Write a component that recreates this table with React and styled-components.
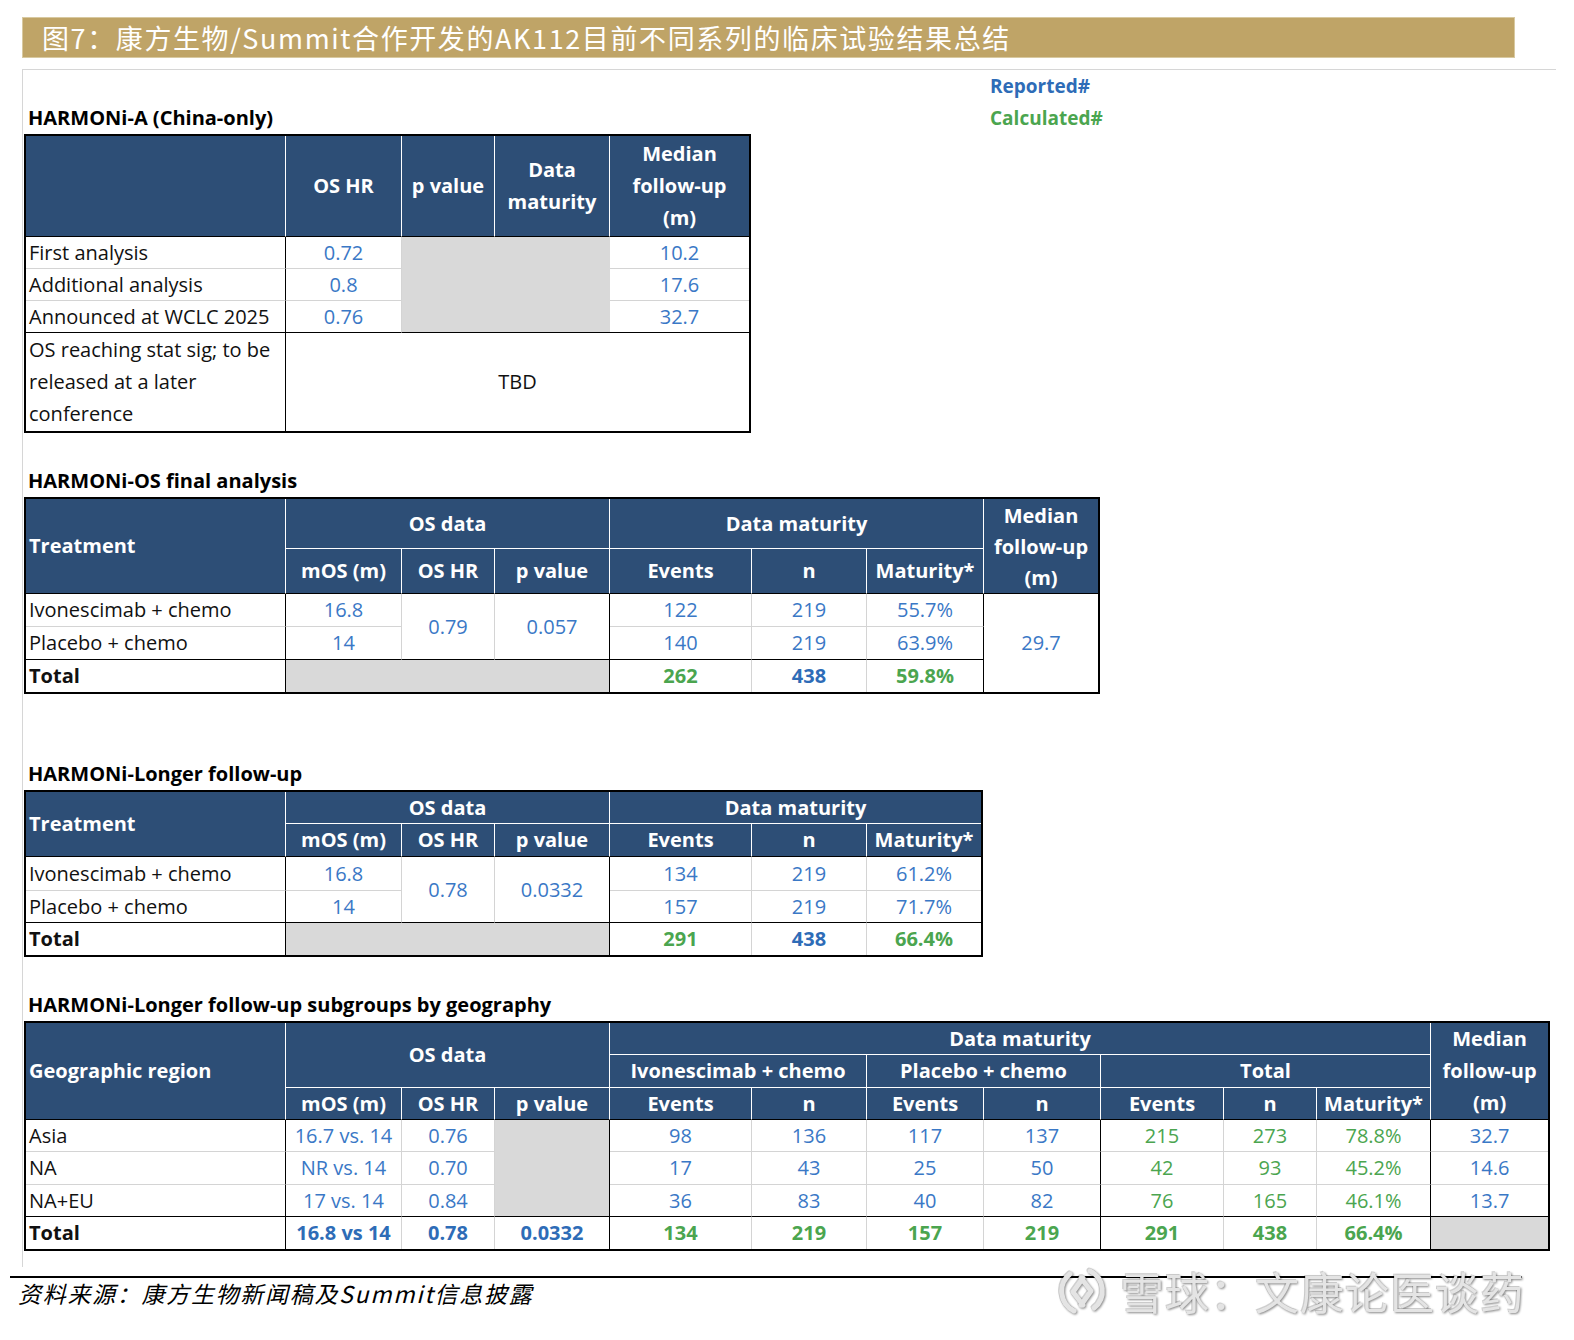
import React from 'react';
import styled, { createGlobalStyle } from 'styled-components';

// --- palette ---
const C = {
  gold: '#bfa467',
  head: '#2d4e76',
  grid: '#d4d4d4',
  fill: '#d9d9d9',
  ink: '#111111',
  blue: '#3a78c6',
  blueBold: '#2e6cb7',
  green: '#4ba54f',
  mark: '#e4e4e4',
};

const tones = { ink: C.ink, blue: C.blue, blueBold: C.blueBold, green: C.green };

const rule = (c) =>
  ({ k: '1px solid #000', g: `1px solid ${C.grid}`, w: '1px solid #fff', n: 'none' }[c]);

const GlobalStyle = createGlobalStyle`
  html, body { margin: 0; padding: 0; background: #fff; }
  body { font-family: "Open Sans", "Noto Sans", "Noto Sans CJK SC", sans-serif; }
`;

// --- Styled Components ---
const Page = styled.div`
  width: 1574px;
  min-height: 1340px;
  padding-top: 17px;
  box-sizing: border-box;
`;

const TitleBar = styled.div`
  margin-left: 22px;
  width: 1493px;
  height: 41px;
  box-sizing: border-box;
  background: ${C.gold};
  border: 1px solid #d8c9a0;
  padding-left: 19px;
  display: flex;
  align-items: center;
  color: #fff;
  font-family: "Noto Sans CJK SC", sans-serif;
  font-size: 27px;
  letter-spacing: 1.6px;
  white-space: nowrap;
`;

const Sheet = styled.div`
  margin: 11px 0 0 22px;
  width: 1532px;
  border-top: 1px solid #d6d6d6;
  border-left: 1px solid #d6d6d6;
  padding: 0 0 16px 1px;
`;

const TopRow = styled.div`
  display: flex;
  align-items: flex-start;
`;

const Section = styled.section`
  margin-top: ${(p) => p.$gap || 0}px;
`;

const SectionTitle = styled.div`
  height: 32px;
  line-height: 32px;
  padding-left: 4px;
  font-size: 20px;
  font-weight: 700;
  color: #000;
  white-space: nowrap;
`;

const Legend = styled.div`
  margin-left: 239px;
  display: flex;
  flex-direction: column;
`;

const LegendItem = styled.div`
  height: 32px;
  line-height: 32px;
  font-size: 19px;
  font-weight: 700;
  color: ${(p) => tones[p.$tone]};
`;

const Grid = styled.table`
  border-collapse: separate;
  border-spacing: 0;
  table-layout: fixed;
  width: ${(p) => p.$w}px;
  border: 2px solid #000;
  font-size: 20px;
`;

const Col = styled.col`
  width: ${(p) => p.$w}px;
`;

const Row = styled.tr`
  height: ${(p) => p.$h}px;
`;

const Th = styled.td`
  background: ${C.head};
  color: #fff;
  font-weight: 700;
  text-align: ${(p) => (p.$left ? 'left' : 'center')};
  padding: 0 2px 0 ${(p) => (p.$left ? 3 : 2)}px;
  line-height: ${(p) => p.$lh || 24}px;
  border-right: ${(p) => rule(p.$r || 'w')};
  border-bottom: ${(p) => rule(p.$b || 'w')};
  white-space: nowrap;
  overflow: hidden;
`;

const Td = styled.td`
  background: ${(p) => (p.$fill ? C.fill : '#fff')};
  color: ${(p) => tones[p.$tone || 'blue']};
  font-weight: ${(p) => (p.$bold ? 700 : 400)};
  text-align: ${(p) => (p.$left ? 'left' : 'center')};
  padding: 0 2px 0 ${(p) => (p.$left ? 3 : 2)}px;
  line-height: ${(p) => p.$lh || 24}px;
  border-right: ${(p) => rule(p.$r || 'g')};
  border-bottom: ${(p) => rule(p.$b || 'g')};
  white-space: nowrap;
  overflow: hidden;
`;

const Label = (props) => <Td $left $tone="ink" $r="k" {...props} />;

const Footer = styled.footer`
  position: relative;
  margin: 9px 0 0 10px;
  width: 1512px;
  height: 56px;
  border-top: 2px solid #000;
`;

const Source = styled.div`
  padding: 0 0 0 8px;
  line-height: 30px;
  font-family: "Noto Sans CJK SC", sans-serif;
  font-style: italic;
  font-size: 23px;
  letter-spacing: 1.7px;
  color: #000;
`;

const Watermark = styled.div`
  position: absolute;
  left: 1046px;
  top: -15px;
  display: flex;
  align-items: center;
  gap: 12px;
  line-height: 56px;
  white-space: nowrap;
  color: ${C.mark};
  font-family: "Noto Sans CJK SC", sans-serif;
  font-size: 44px;
  font-weight: 400;
  letter-spacing: 1px;
  filter: drop-shadow(1.5px 1.5px 1px rgba(0, 0, 0, 0.45)) drop-shadow(-0.5px -0.5px 0.5px rgba(0, 0, 0, 0.18));
`;

const LogoBox = styled.svg`
  flex-shrink: 0;
`;

const SnowballLogo = () => (
  <LogoBox width="52" height="52" viewBox="0 0 52 52" fill="none" stroke={C.mark} strokeWidth="5" strokeLinecap="round" strokeLinejoin="round">
    <path d="M14 9 A22 22 0 0 0 18 46" />
    <path d="M38 43 A22 22 0 0 0 34 6" />
    <path d="M27 13 L17 27 L27 40" />
    <path d="M25 13 L35 26 L25 40" />
  </LogoBox>
);

const HarmoniA = () => (
  <Grid $w={727}>
    <colgroup>
      {[260, 116, 93, 115, 139].map((w, i) => <Col key={i} $w={w} />)}
    </colgroup>
    <tbody>
      <Row $h={101}>
        <Th $b="k" />
        <Th $b="k">OS HR</Th>
        <Th $b="k">p value</Th>
        <Th $b="k" $lh={32}>Data<br />maturity</Th>
        <Th $b="k" $r="n" $lh={32}>Median<br />follow-up<br />(m)</Th>
      </Row>
      <Row $h={32}>
        <Label>First analysis</Label>
        <Td>0.72</Td>
        <Td $fill colSpan={2} rowSpan={3} $r="n" $b="k" />
        <Td $r="n">10.2</Td>
      </Row>
      <Row $h={32}>
        <Label>Additional analysis</Label>
        <Td>0.8</Td>
        <Td $r="n">17.6</Td>
      </Row>
      <Row $h={32}>
        <Label $b="k">Announced at WCLC 2025</Label>
        <Td $b="k">0.76</Td>
        <Td $b="k" $r="n">32.7</Td>
      </Row>
      <Row $h={98}>
        <Label $b="n" $lh={32}>OS reaching stat sig; to be<br />released at a later<br />conference</Label>
        <Td colSpan={4} $tone="ink" $r="n" $b="n">TBD</Td>
      </Row>
    </tbody>
  </Grid>
);

const HarmoniOS = () => (
  <Grid $w={1076}>
    <colgroup>
      {[260, 116, 93, 115, 142, 115, 117, 114].map((w, i) => <Col key={i} $w={w} />)}
    </colgroup>
    <tbody>
      <Row $h={50}>
        <Th $left rowSpan={2} $b="k">Treatment</Th>
        <Th colSpan={3}>OS data</Th>
        <Th colSpan={3}>Data maturity</Th>
        <Th rowSpan={2} $r="n" $b="k" $lh={31}>Median<br />follow-up<br />(m)</Th>
      </Row>
      <Row $h={45}>
        <Th $b="k">mOS (m)</Th>
        <Th $b="k">OS HR</Th>
        <Th $b="k">p value</Th>
        <Th $b="k">Events</Th>
        <Th $b="k">n</Th>
        <Th $b="k">Maturity*</Th>
      </Row>
      <Row $h={33}>
        <Label>Ivonescimab + chemo</Label>
        <Td>16.8</Td>
        <Td rowSpan={2} $b="k">0.79</Td>
        <Td rowSpan={2} $b="k" $r="k">0.057</Td>
        <Td>122</Td>
        <Td>219</Td>
        <Td $r="k">55.7%</Td>
        <Td rowSpan={3} $r="n" $b="n">29.7</Td>
      </Row>
      <Row $h={33}>
        <Label $b="k">Placebo + chemo</Label>
        <Td $b="k">14</Td>
        <Td $b="k">140</Td>
        <Td $b="k">219</Td>
        <Td $b="k" $r="k">63.9%</Td>
      </Row>
      <Row $h={32}>
        <Label $b="n" $bold>Total</Label>
        <Td $fill colSpan={3} $r="k" $b="n" />
        <Td $b="n" $bold $tone="green">262</Td>
        <Td $b="n" $bold $tone="blueBold">438</Td>
        <Td $b="n" $r="k" $bold $tone="green">59.8%</Td>
      </Row>
    </tbody>
  </Grid>
);

const HarmoniLonger = () => (
  <Grid $w={959}>
    <colgroup>
      {[260, 116, 93, 115, 142, 115, 114].map((w, i) => <Col key={i} $w={w} />)}
    </colgroup>
    <tbody>
      <Row $h={32}>
        <Th $left rowSpan={2} $b="k">Treatment</Th>
        <Th colSpan={3}>OS data</Th>
        <Th colSpan={3} $r="n">Data maturity</Th>
      </Row>
      <Row $h={33}>
        <Th $b="k">mOS (m)</Th>
        <Th $b="k">OS HR</Th>
        <Th $b="k">p value</Th>
        <Th $b="k">Events</Th>
        <Th $b="k">n</Th>
        <Th $b="k" $r="n">Maturity*</Th>
      </Row>
      <Row $h={34}>
        <Label>Ivonescimab + chemo</Label>
        <Td>16.8</Td>
        <Td rowSpan={2} $b="k">0.78</Td>
        <Td rowSpan={2} $b="k" $r="k">0.0332</Td>
        <Td>134</Td>
        <Td>219</Td>
        <Td $r="n">61.2%</Td>
      </Row>
      <Row $h={32}>
        <Label $b="k">Placebo + chemo</Label>
        <Td $b="k">14</Td>
        <Td $b="k">157</Td>
        <Td $b="k">219</Td>
        <Td $b="k" $r="n">71.7%</Td>
      </Row>
      <Row $h={32}>
        <Label $b="n" $bold>Total</Label>
        <Td $fill colSpan={3} $r="k" $b="n" />
        <Td $b="n" $bold $tone="green">291</Td>
        <Td $b="n" $bold $tone="blueBold">438</Td>
        <Td $b="n" $r="n" $bold $tone="green">66.4%</Td>
      </Row>
    </tbody>
  </Grid>
);

const regions = [
  { name: 'Asia', mos: '16.7 vs. 14', hr: '0.76', ivo: ['98', '136'], pbo: ['117', '137'], tot: ['215', '273', '78.8%'], fu: '32.7', h: 32 },
  { name: 'NA', mos: 'NR vs. 14', hr: '0.70', ivo: ['17', '43'], pbo: ['25', '50'], tot: ['42', '93', '45.2%'], fu: '14.6', h: 33 },
  { name: 'NA+EU', mos: '17 vs. 14', hr: '0.84', ivo: ['36', '83'], pbo: ['40', '82'], tot: ['76', '165', '46.1%'], fu: '13.7', h: 32 },
];

const Geography = () => (
  <Grid $w={1526}>
    <colgroup>
      {[260, 116, 93, 115, 142, 115, 117, 117, 123, 93, 114, 117].map((w, i) => <Col key={i} $w={w} />)}
    </colgroup>
    <tbody>
      <Row $h={32}>
        <Th $left rowSpan={3} $b="k">Geographic region</Th>
        <Th colSpan={3} rowSpan={2}>OS data</Th>
        <Th colSpan={7}>Data maturity</Th>
        <Th rowSpan={3} $r="n" $b="k" $lh={32}>Median<br />follow-up<br />(m)</Th>
      </Row>
      <Row $h={33}>
        <Th colSpan={2}>Ivonescimab + chemo</Th>
        <Th colSpan={2}>Placebo + chemo</Th>
        <Th colSpan={3}>Total</Th>
      </Row>
      <Row $h={32}>
        {['mOS (m)', 'OS HR', 'p value', 'Events', 'n', 'Events', 'n', 'Events', 'n', 'Maturity*'].map((t, i) => (
          <Th key={i} $b="k">{t}</Th>
        ))}
      </Row>
      {regions.map((r, i) => {
        const last = i === regions.length - 1;
        const b = last ? 'k' : 'g';
        return (
          <Row key={r.name} $h={r.h}>
            <Label $b={b}>{r.name}</Label>
            <Td $b={b}>{r.mos}</Td>
            <Td $b={b}>{r.hr}</Td>
            {i === 0 && <Td $fill rowSpan={3} $r="k" $b="k" />}
            <Td $b={b}>{r.ivo[0]}</Td>
            <Td $b={b}>{r.ivo[1]}</Td>
            <Td $b={b}>{r.pbo[0]}</Td>
            <Td $b={b} $r="k">{r.pbo[1]}</Td>
            <Td $b={b} $tone="green">{r.tot[0]}</Td>
            <Td $b={b} $tone="green">{r.tot[1]}</Td>
            <Td $b={b} $r="k" $tone="green">{r.tot[2]}</Td>
            <Td $b={b} $r="n">{r.fu}</Td>
          </Row>
        );
      })}
      <Row $h={32}>
        <Label $b="n" $bold>Total</Label>
        <Td $b="n" $bold $tone="blueBold">16.8 vs 14</Td>
        <Td $b="n" $bold $tone="blueBold">0.78</Td>
        <Td $b="n" $r="k" $bold $tone="blueBold">0.0332</Td>
        <Td $b="n" $bold $tone="green">134</Td>
        <Td $b="n" $bold $tone="green">219</Td>
        <Td $b="n" $bold $tone="green">157</Td>
        <Td $b="n" $r="k" $bold $tone="green">219</Td>
        <Td $b="n" $bold $tone="green">291</Td>
        <Td $b="n" $bold $tone="green">438</Td>
        <Td $b="n" $r="k" $bold $tone="green">66.4%</Td>
        <Td $fill $b="n" $r="n" />
      </Row>
    </tbody>
  </Grid>
);

const App = () => (
  <Page>
    <GlobalStyle />
    <TitleBar>图7：康方生物/Summit合作开发的AK112目前不同系列的临床试验结果总结</TitleBar>
    <Sheet>
      <TopRow>
        <Section $gap={32}>
          <SectionTitle>HARMONi-A (China-only)</SectionTitle>
          <HarmoniA />
        </Section>
        <Legend>
          <LegendItem $tone="blueBold">Reported#</LegendItem>
          <LegendItem $tone="green">Calculated#</LegendItem>
        </Legend>
      </TopRow>
      <Section $gap={32}>
        <SectionTitle>HARMONi-OS final analysis</SectionTitle>
        <HarmoniOS />
      </Section>
      <Section $gap={64}>
        <SectionTitle>HARMONi-Longer follow-up</SectionTitle>
        <HarmoniLonger />
      </Section>
      <Section $gap={32}>
        <SectionTitle>HARMONi-Longer follow-up subgroups by geography</SectionTitle>
        <Geography />
      </Section>
    </Sheet>
    <Footer>
      <Source>资料来源：康方生物新闻稿及Summit信息披露</Source>
      <Watermark>
        <SnowballLogo />
        <span>雪球：文康论医谈药</span>
      </Watermark>
    </Footer>
  </Page>
);

export default App;
